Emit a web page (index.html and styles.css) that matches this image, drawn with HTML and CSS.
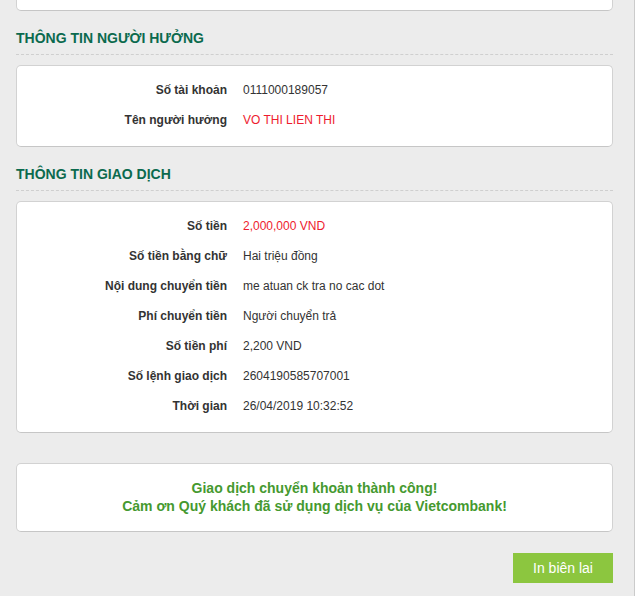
FILE: index.html
```html
<html>
<head>
    <meta charset="utf-8">
    <link rel="stylesheet" href="styles.css">
</head>
<body>
<div class="page">
    <div class="box box_top"></div>

    <div class="title">THÔNG TIN NGƯỜI HƯỞNG</div>
    <div class="box">
        <div class="row"><span class="lbl">Số tài khoản</span><span class="val">0111000189057</span></div>
        <div class="row"><span class="lbl">Tên người hưởng</span><span class="val red">VO THI LIEN THI</span></div>
    </div>

    <div class="title">THÔNG TIN GIAO DỊCH</div>
    <div class="box">
        <div class="row"><span class="lbl">Số tiền</span><span class="val red">2,000,000 VND</span></div>
        <div class="row"><span class="lbl">Số tiền bằng chữ</span><span class="val">Hai triệu đồng</span></div>
        <div class="row"><span class="lbl">Nội dung chuyển tiền</span><span class="val">me atuan ck tra no cac dot</span></div>
        <div class="row"><span class="lbl">Phí chuyển tiền</span><span class="val">Người chuyển trả</span></div>
        <div class="row"><span class="lbl">Số tiền phí</span><span class="val">2,200 VND</span></div>
        <div class="row"><span class="lbl">Số lệnh giao dịch</span><span class="val">2604190585707001</span></div>
        <div class="row"><span class="lbl">Thời gian</span><span class="val">26/04/2019 10:32:52</span></div>
    </div>

    <div class="box box_msg">
        Giao dịch chuyển khoản thành công!<br>
        Cảm ơn Quý khách đã sử dụng dịch vụ của Vietcombank!
    </div>

    <div class="actions">
        <button class="btn_print">In biên lai</button>
    </div>
</div>
</body>
</html>
```

FILE: styles.css
```css
body {
    margin:0;
    background:#fff;
    font-family:"Liberation Sans", Arial, sans-serif;
    font-size:12px;
    color:#333;
}

.page {
    width:635px;
    height:596px;
    padding:0 21px 0 16px;
    box-sizing:border-box;
    background:#ececec;
    border-right:1px solid #cbcbcb;
    overflow:hidden;
}

.box {
    background:#fff;
    border:1px solid #d2d2d2;
    border-bottom-color:#c6c6c6;
    border-radius:5px;
    padding:9px 0 11px 0;
}

.box_top {
    margin-top:-30px;
    height:39px;
    padding:0;
}

.title {
    margin-top:19px;
    margin-bottom:10px;
    padding-bottom:8px;
    border-bottom:1px dashed #cfcfcf;
    color:#0b6a4e;
    font-size:14px;
    font-weight:bold;
    line-height:16px;
}

.row {
    display:flex;
    height:30px;
    align-items:center;
}

.lbl {
    width:210px;
    text-align:right;
    font-weight:bold;
    padding-right:16px;
}

.val {
    color:#333;
}

.red {
    color:#ee1b2e;
}

.box_msg {
    margin-top:30px;
    padding:15px 0 16px 0;
    text-align:center;
    color:#45992f;
    font-size:14px;
    font-weight:bold;
    line-height:18px;
}

.actions {
    display:flex;
    justify-content:flex-end;
    margin-top:21px;
}

.btn_print {
    width:100px;
    height:30px;
    border:0;
    background:#8cc63f;
    color:#fff;
    font-family:"Liberation Sans", Arial, sans-serif;
    font-size:14px;
    padding:0;
}
```
